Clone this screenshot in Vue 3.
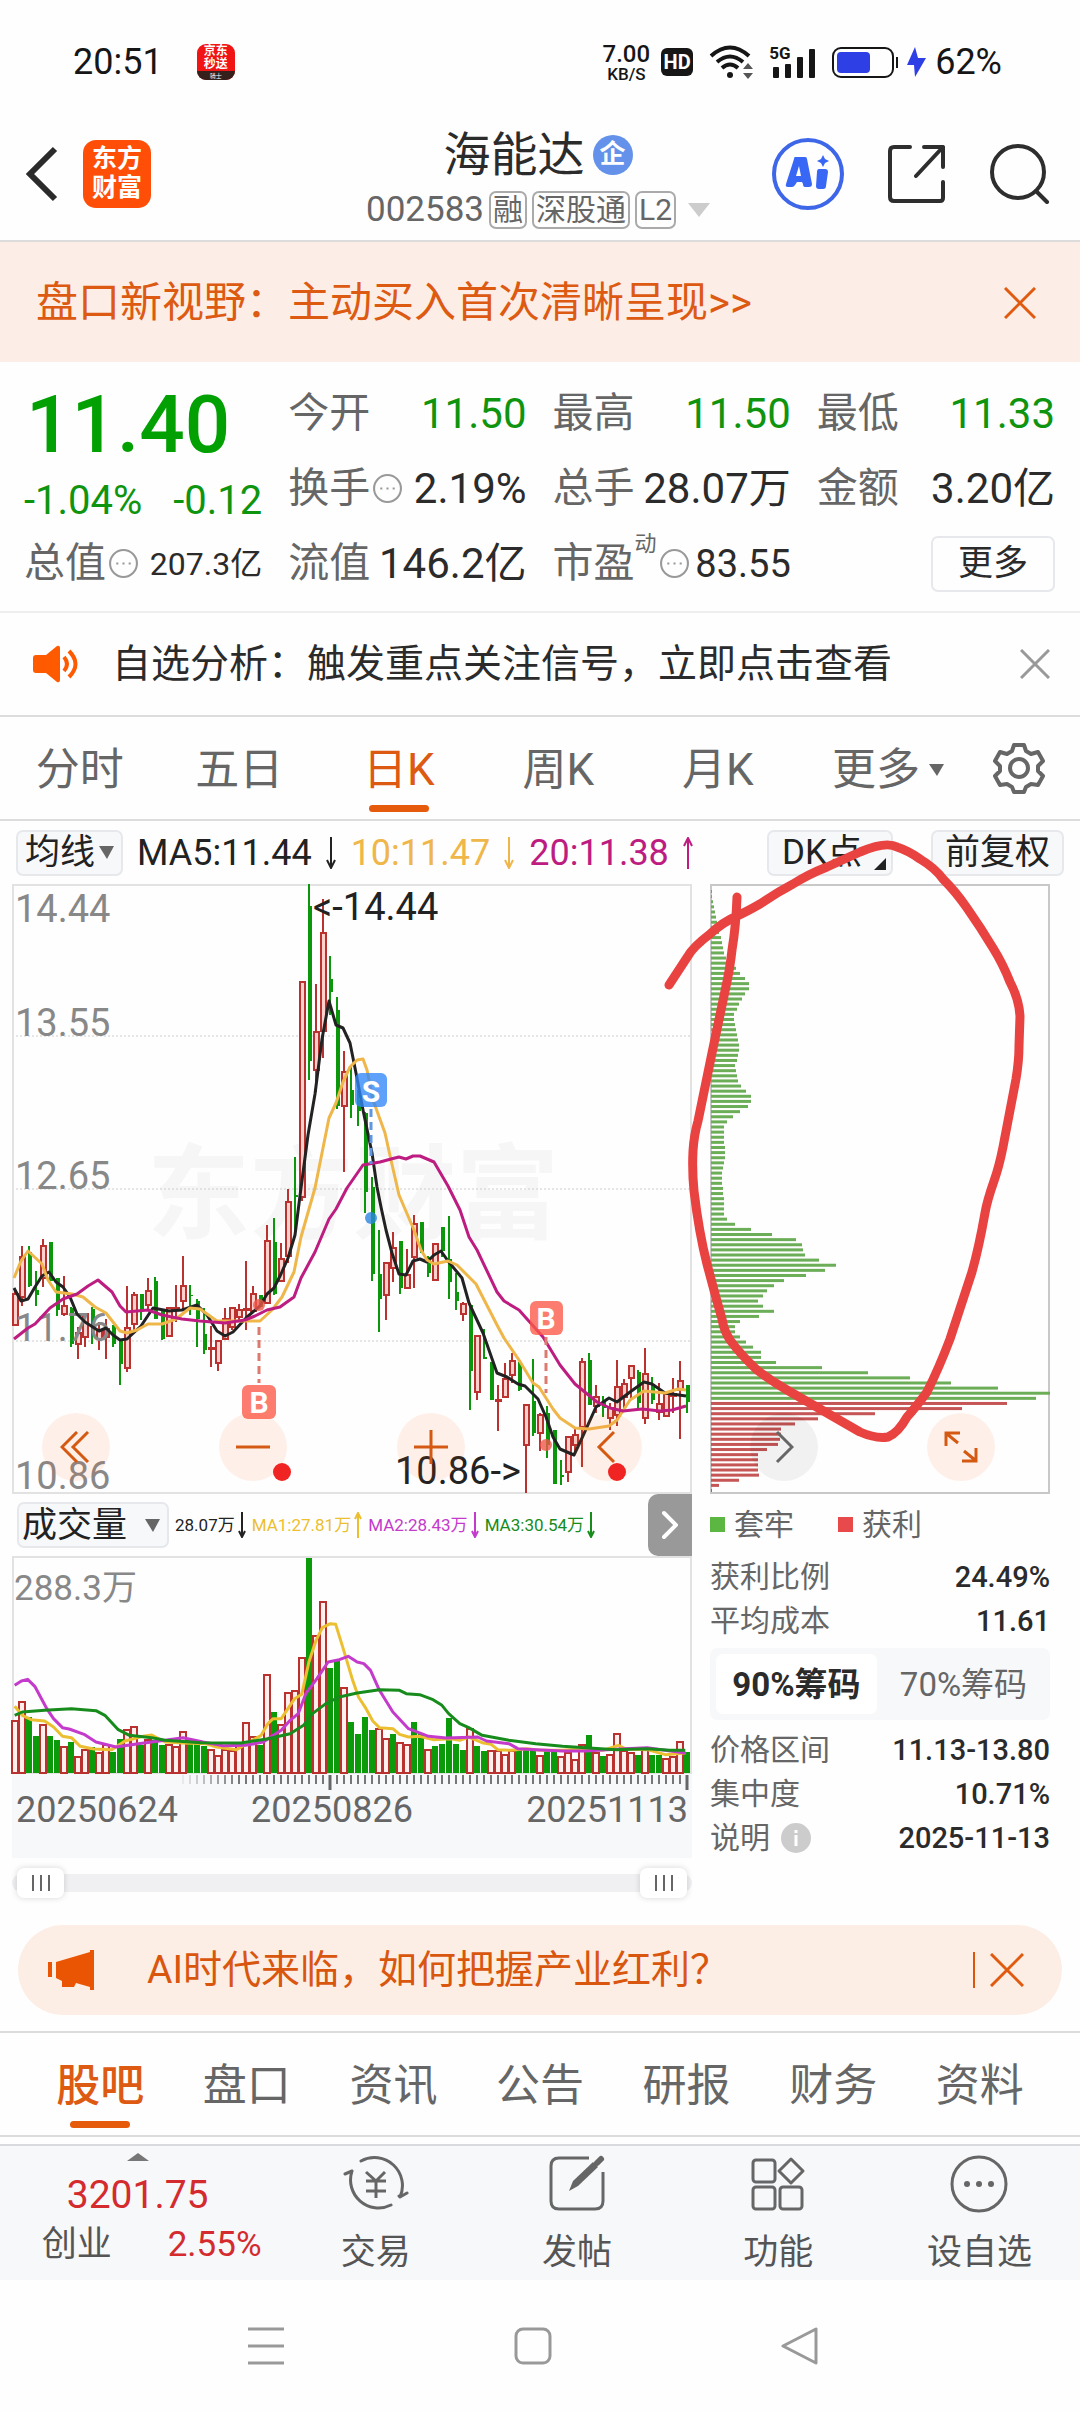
<script setup>
import { ref } from 'vue'

// [direction, high, body top, body bottom, low] in chart units
const candleRows = [
  ['r', 1290, 1294, 1325, 1326], ['r', 1246, 1257, 1297, 1306], ['g', 1246, 1252, 1286, 1287], ['g', 1271, 1290, 1295, 1306],
  ['r', 1239, 1246, 1278, 1287], ['g', 1242, 1242, 1281, 1281], ['g', 1278, 1278, 1310, 1316], ['r', 1276, 1306, 1314, 1316],
  ['g', 1307, 1308, 1344, 1347], ['r', 1327, 1333, 1344, 1359], ['r', 1313, 1314, 1337, 1347], ['g', 1307, 1309, 1331, 1344],
  ['r', 1322, 1330, 1339, 1350], ['r', 1319, 1329, 1337, 1359], ['g', 1325, 1325, 1344, 1347], ['g', 1339, 1339, 1364, 1385],
  ['r', 1286, 1328, 1368, 1372], ['r', 1292, 1295, 1324, 1330], ['g', 1294, 1294, 1311, 1320], ['r', 1278, 1291, 1305, 1311],
  ['g', 1277, 1281, 1319, 1319], ['g', 1309, 1309, 1339, 1340], ['r', 1308, 1308, 1336, 1336], ['r', 1285, 1308, 1309, 1322],
  ['r', 1256, 1286, 1301, 1309], ['g', 1285, 1295, 1296, 1315], ['g', 1299, 1301, 1319, 1347], ['g', 1308, 1334, 1350, 1354],
  ['r', 1326, 1348, 1349, 1367], ['r', 1341, 1341, 1363, 1371], ['r', 1308, 1319, 1339, 1339], ['r', 1308, 1308, 1327, 1330],
  ['r', 1304, 1310, 1317, 1322], ['r', 1261, 1309, 1310, 1330], ['r', 1286, 1294, 1311, 1312], ['g', 1295, 1295, 1307, 1307],
  ['r', 1225, 1241, 1303, 1303], ['g', 1218, 1242, 1294, 1295], ['r', 1243, 1259, 1281, 1281], ['r', 1189, 1202, 1256, 1263],
  ['g', 1157, 1195, 1197, 1235], ['r', 982, 982, 1197, 1201], ['g', 884, 906, 1061, 1080], ['r', 984, 1032, 1070, 1092],
  ['r', 899, 933, 1031, 1058], ['g', 956, 979, 992, 1015], ['g', 997, 1010, 1106, 1109], ['r', 1051, 1072, 1106, 1172],
  ['g', 1066, 1090, 1105, 1118], ['g', 1090, 1100, 1111, 1126], ['g', 1112, 1113, 1192, 1213], ['g', 1177, 1187, 1274, 1281],
  ['g', 1230, 1274, 1299, 1332], ['r', 1263, 1263, 1295, 1320], ['r', 1232, 1248, 1268, 1282], ['g', 1241, 1241, 1288, 1294],
  ['r', 1249, 1275, 1288, 1288], ['r', 1215, 1224, 1257, 1288], ['g', 1222, 1222, 1253, 1253], ['g', 1256, 1257, 1273, 1277],
  ['r', 1244, 1244, 1280, 1280], ['g', 1227, 1227, 1251, 1257], ['g', 1216, 1259, 1282, 1299], ['g', 1273, 1292, 1301, 1310],
  ['r', 1302, 1304, 1314, 1321], ['g', 1305, 1305, 1371, 1410], ['r', 1336, 1336, 1392, 1400], ['g', 1329, 1357, 1359, 1359],
  ['g', 1362, 1362, 1400, 1400], ['r', 1385, 1400, 1401, 1431], ['r', 1363, 1379, 1397, 1397], ['r', 1353, 1361, 1375, 1383],
  ['g', 1362, 1362, 1390, 1391], ['r', 1405, 1405, 1445, 1493], ['g', 1359, 1401, 1433, 1436], ['r', 1413, 1415, 1433, 1451],
  ['g', 1406, 1413, 1445, 1458], ['g', 1430, 1430, 1484, 1484], ['g', 1460, 1475, 1477, 1485], ['r', 1437, 1437, 1472, 1482],
  ['r', 1427, 1435, 1445, 1453], ['r', 1358, 1362, 1427, 1467], ['g', 1353, 1360, 1405, 1405], ['r', 1385, 1397, 1406, 1413],
  ['g', 1396, 1400, 1408, 1417], ['r', 1403, 1408, 1418, 1430], ['r', 1360, 1387, 1415, 1426], ['r', 1379, 1384, 1397, 1412],
  ['r', 1366, 1366, 1378, 1398], ['g', 1370, 1372, 1403, 1408], ['r', 1348, 1374, 1418, 1424], ['g', 1377, 1387, 1400, 1404],
  ['r', 1383, 1404, 1412, 1420], ['r', 1394, 1394, 1416, 1416], ['r', 1378, 1394, 1396, 1413], ['r', 1361, 1381, 1390, 1439],
  ['g', 1385, 1385, 1402, 1413],
]
const candles = candleRows.map(([dir, high, top, bottom, low], i) => ({ dir, high, top, bottom, low, x: 15 + i * 7 }))

const volumes = [
  53, 72, 56, 37, 49, 37, 33, 27, 31, 17, 24, 26, 21, 29, 21, 34, 44, 47, 28, 34, 33, 28, 29, 27, 42, 33, 31, 27, 24, 18, 24, 23,
  29, 51, 37, 28, 99, 61, 49, 81, 83, 116, 215, 138, 172, 105, 113, 86, 51, 39, 56, 43, 45, 35, 39, 31, 29, 51, 39, 24, 27, 29,
  55, 29, 23, 45, 27, 22, 23, 23, 19, 23, 23, 23, 23, 18, 22, 23, 17, 21, 14, 29, 38, 21, 17, 19, 40, 23, 21, 18, 25, 18, 18,
  15, 17, 32, 21,
]
const volumeDirs =
  'rrggrggrgrrgrrggrrgrggrrrgggrrrrrrrgrgrrrrgrrggrggggrrgrrggrgggggrggrrrrgggrggrrrrgrgrrrrgrggrrrg'
const volumeBars = volumes.map((h, i) => ({ h, x: 15 + i * 7, dir: volumeDirs[i] }))

const ticks = Array.from({ length: 73 }, (_, i) => ({ x: 183 + i * 7, o: Math.min(1, (i + 1) / 9) }))

const trapped = [
  1, 1, 2, 3, 4, 5, 6, 7, 8, 10, 11, 12, 13, 15, 18, 25, 29, 34, 38, 38, 34, 31, 28, 26, 23, 23, 24, 25, 26, 27, 28, 28, 27, 26,
  24, 25, 26, 27, 30, 35, 40, 40, 37, 29, 22, 16, 13, 13, 13, 13, 14, 14, 14, 13, 12, 11, 11, 11, 12, 12, 13, 13, 13, 13, 16, 24,
  40, 61, 85, 91, 92, 94, 108, 125, 114, 95, 73, 63, 56, 52, 47, 52, 63, 48, 29, 24, 24, 29, 35, 42, 50, 50, 65, 111, 157, 199,
  240, 287, 339, 325,
]
const profit = [296, 251, 164, 107, 84, 70, 70, 69, 67, 56, 47, 47, 47, 47, 48, 28, 8, 1]
const chips = [...trapped.map((w) => ({ w, c: '#6cad58' })), ...profit.map((w) => ({ w, c: '#c65555' }))].map((d, i, all) => ({
  ...d,
  y: 890 + (i * 599) / (all.length - 1),
}))

const periods = ['分时', '五日', '日K', '周K', '月K']
const sections = ['股吧', '盘口', '资讯', '公告', '研报', '财务', '资料']
const period = ref('日K')
const section = ref('股吧')
const chipRange = ref('90%')
</script>

<template>
  <main class="page">
    <header class="status">
      <span class="clock">20:51</span>
      <span class="jd"><b>京东<br />秒送</b><i>骑士</i></span>
      <span class="net"><b>7.00</b><span>KB/S</span></span>
      <span class="hd">HD</span>
      <svg class="wifi" width="48" height="36" viewBox="0 0 48 36" fill="none" stroke="#161616">
        <path d="M2 12Q21-5 40 12M8 18Q21 7 34 18M13 24Q21 17 29 24" stroke-width="4" />
        <circle cx="21" cy="31" r="3" fill="#161616" stroke="none" />
        <path d="M34 25l5-6 5 6zM34 29l5 6 5-6z" fill="#555" stroke="none" />
      </svg>
      <span class="cell">
        <span>5G</span>
        <svg width="48" height="34" viewBox="0 0 48 34" fill="#161616">
          <rect x="4" y="22" width="6" height="11" rx="1" /><rect x="16" y="19" width="6" height="14" rx="1" />
          <rect x="28" y="12" width="6" height="21" rx="1" /><rect x="40" y="4" width="6" height="29" rx="1" />
        </svg>
      </span>
      <svg class="battery" width="96" height="34" viewBox="0 0 96 34">
        <rect x="2" y="3" width="60" height="29" rx="8" fill="none" stroke="#161616" stroke-width="2" />
        <rect x="6" y="7" width="33" height="21" rx="4" fill="#2f3fe6" />
        <rect x="65" y="12" width="2" height="11" fill="#161616" />
        <path d="M84 2L76 20h7l1 12 11-19h-8z" fill="#2f3fe6" />
      </svg>
      <span class="clock">62%</span>
    </header>

    <header class="head">
      <div class="head-left">
        <button class="plain" aria-label="返回">
          <svg width="32" height="56" viewBox="0 0 32 56" fill="none" stroke="#2b2b2b" stroke-width="6"><path d="M29 3L4 28l25 25" /></svg>
        </button>
        <span class="logo">东方<br />财富</span>
      </div>
      <div class="head-mid">
        <h1>海能达<span class="badge">企</span></h1>
        <p><span>002583</span><i>融</i><i>深股通</i><i>L2</i><svg width="22" height="14" viewBox="0 0 22 14"><path d="M0 0h22L11 14z" fill="#ccc" /></svg></p>
      </div>
      <div class="head-right">
        <button class="plain" aria-label="AI">
          <svg width="72" height="72" viewBox="0 0 72 72">
            <circle cx="36" cy="36" r="34" fill="none" stroke="#3d67e8" stroke-width="4" />
            <path fill="#3867f5" fill-rule="evenodd" d="M23 19h10q2 0 2 2l5 25q0 3-3 3h-4q-2 0-2-3l-1-2h-5l-2 3q-1 2-3 2h-4q-3 0-2-3l8-25q0-2 1-2zm4 9l-3 10h5zM47 31h6q3 0 3 3l-2 14q0 3-3 3h-4q-3 0-3-3l1-14q0-3 2-3zM51 17l2 4 4 2-4 2-2 4-2-4-4-2 4-2z" />
          </svg>
        </button>
        <button class="plain" aria-label="分享">
          <svg width="58" height="58" viewBox="0 0 58 58" fill="none" stroke="#2e2e2e" stroke-width="4" stroke-linecap="round" stroke-linejoin="round">
            <path d="M22 2H6Q2 2 2 6v46q0 4 4 4h46q3 0 3-3V37M36 2h19v20M55 2L28 31" />
          </svg>
        </button>
        <button class="plain" aria-label="搜索">
          <svg width="60" height="60" viewBox="0 0 60 60" fill="none" stroke="#2e2e2e" stroke-width="4" stroke-linecap="round">
            <circle cx="28" cy="28" r="26" /><path d="M46 47l11 11" />
          </svg>
        </button>
      </div>
    </header>

    <section class="banner">
      <a href="#">盘口新视野：主动买入首次清晰呈现&gt;&gt;</a>
      <button class="plain" aria-label="关闭"><svg width="32" height="32" viewBox="0 0 32 32" stroke="#e05a10" stroke-width="3"><path d="M1 1l30 30M31 1L1 31" /></svg></button>
    </section>

    <section class="quote">
      <div class="price"><strong>11.40</strong><p><span>-1.04%</span><span>-0.12</span></p></div>
      <p><span>今开</span><b class="green">11.50</b></p>
      <p><span>最高</span><b class="green">11.50</b></p>
      <p><span>最低</span><b class="green">11.33</b></p>
      <p><span>换手<svg class="dots" viewBox="0 0 30 30"><circle cx="15" cy="15" r="13" /><path d="M8 15h2M14 15h2M20 15h2" /></svg></span><b>2.19%</b></p>
      <p><span>总手</span><b>28.07万</b></p>
      <p><span>金额</span><b>3.20亿</b></p>
      <p><span>总值<svg class="dots" viewBox="0 0 30 30"><circle cx="15" cy="15" r="13" /><path d="M8 15h2M14 15h2M20 15h2" /></svg></span><b class="small">207.3亿</b></p>
      <p><span>流值</span><b>146.2亿</b></p>
      <p><span>市盈<sup>动</sup><svg class="dots" viewBox="0 0 30 30"><circle cx="15" cy="15" r="13" /><path d="M8 15h2M14 15h2M20 15h2" /></svg></span><b class="mid">83.55</b></p>
      <p class="end"><button class="more">更多</button></p>
    </section>

    <section class="news">
      <svg width="46" height="38" viewBox="0 0 46 38">
        <path d="M3 10h10L24 1q3-1 3 2v32q0 3-3 2L13 28H3q-3 0-3-3V13q0-3 3-3z" fill="#ff5a00" />
        <path d="M31 12q6 7 0 14M36 6q13 13 0 26" fill="none" stroke="#ff5a00" stroke-width="4" />
      </svg>
      <a href="#">自选分析：触发重点关注信号，立即点击查看</a>
      <button class="plain" aria-label="关闭"><svg width="30" height="30" viewBox="0 0 30 30" stroke="#999" stroke-width="3"><path d="M1 1l28 28M29 1L1 29" /></svg></button>
    </section>

    <nav class="periods">
      <button v-for="p in periods" :key="p" :class="{ on: p === period }" @click="period = p"><span>{{ p }}</span></button>
      <button class="drop"><span>更多</span><svg width="15" height="12" viewBox="0 0 15 12"><path d="M0 0h15L8 12z" fill="#666" /></svg></button>
      <button class="gear" aria-label="设置">
        <svg width="52" height="52" viewBox="0 0 52 52" fill="none" stroke="#666" stroke-width="4" stroke-linejoin="round">
          <path d="M21 3h10l2 6 5 3 7-2 5 9-5 5v5l5 5-5 9-7-1-5 3-2 5H21l-2-5-5-3-7 1-5-9 5-5v-5l-5-5 5-9 7 2 5-3z" /><circle cx="26" cy="26" r="9" />
        </svg>
      </button>
    </nav>

    <section class="board">
      <div class="tools">
        <button class="chip-btn">均线<svg width="15" height="13" viewBox="0 0 15 13"><path d="M0 0h15L8 13z" fill="#666" /></svg></button>
        <span class="ma">MA5:11.44<svg viewBox="0 0 12 32"><path d="M6 0v30M2 23l4 8 4-8" /></svg></span>
        <span class="ma yellow">10:11.47<svg viewBox="0 0 12 32"><path d="M6 0v30M2 23l4 8 4-8" /></svg></span>
        <span class="ma pink">20:11.38<svg viewBox="0 0 12 32"><path d="M6 32V2M2 9l4-8 4 8" /></svg></span>
        <button class="chip-btn dk">DK点<svg width="12" height="12" viewBox="0 0 12 12"><path d="M12 0v12H0z" fill="#222" /></svg></button>
        <button class="chip-btn adj">前复权</button>
      </div>

      <div class="cols">
        <div class="left">
          <div class="stage">
            <svg class="plot" viewBox="12 884 680 610">
              <text x="147" y="1231" class="mark">东方财富</text>
              <g stroke="#ccc" stroke-width="1" stroke-dasharray="2 2"><path d="M12 1036H692M12 1189H692M12 1341H692" /></g>
              <rect x="13" y="885" width="678" height="608" fill="none" stroke="#e2e2e2" stroke-width="2" />
              <g v-for="c in candles" :key="c.x">
                <template v-if="c.dir === 'r'">
                  <path :d="`M${c.x} ${c.high}V${c.top}M${c.x} ${c.bottom}V${c.low}`" stroke="#b93230" stroke-width="2" />
                  <rect :x="c.x - 2" :y="c.top" width="5" :height="c.bottom - c.top" fill="#ffd0cc" stroke="#b93230" stroke-width="2" />
                </template>
                <template v-else>
                  <path :d="`M${c.x} ${c.high}V${c.low}`" stroke="#0c960c" stroke-width="2" />
                  <rect :x="c.x - 1" :y="c.top" width="4" :height="c.bottom - c.top" fill="#0c960c" />
                </template>
              </g>
              <g class="axis">
                <text x="15" y="922">14.44</text><text x="15" y="1036">13.55</text><text x="15" y="1189">12.65</text>
                <text x="15" y="1341">11.76</text><text x="15" y="1489">10.86</text>
              </g>
              <g fill="none" stroke-width="3" stroke-linejoin="round">
                <polyline stroke="#222" points="14,1288 21,1301 28,1299 35,1287 42,1276 49,1272 56,1282 63,1287 70,1297 77,1314 85,1322 99,1331 106,1328 113,1335 120,1340 127,1339 141,1326 153,1308 169,1311 182,1310 197,1305 207,1315 217,1331 225,1336 233,1332 247,1317 260,1306 267,1294 274,1288 281,1274 288,1258 295,1235 301,1188 308,1135 315,1094 322,1039 329,1001 336,1025 343,1028 350,1043 356,1073 363,1110 372,1153 377,1187 381,1207 386,1230 392,1253 399,1274 406,1275 413,1261 420,1259 427,1262 434,1255 441,1251 448,1261 462,1278 469,1303 483,1333 497,1373 507,1377 518,1384 525,1386 538,1399 546,1417 553,1437 560,1449 574,1455 582,1438 596,1407 609,1398 617,1402 630,1392 644,1382 652,1384 665,1393 686,1396" />
                <polyline stroke="#efb64a" points="14,1278 21,1261 28,1251 42,1264 48,1280 56,1292 72,1294 83,1297 95,1307 106,1313 120,1331 127,1333 137,1330 148,1324 162,1324 176,1319 190,1308 200,1309 217,1321 260,1321 272,1310 282,1297 294,1272 301,1237 315,1188 329,1118 336,1103 343,1082 350,1067 357,1060 363,1059 367,1070 373,1100 385,1133 391,1160 399,1195 405,1209 414,1230 421,1250 427,1260 434,1264 448,1261 457,1265 476,1284 497,1325 504,1338 519,1360 533,1383 539,1387 553,1409 560,1418 575,1428 589,1429 609,1426 617,1420 630,1400 644,1391 665,1393 678,1389 686,1390" />
                <polyline stroke="#bd1c80" points="14,1339 28,1328 35,1324 50,1308 63,1299 77,1294 88,1286 98,1280 112,1292 120,1306 126,1312 148,1310 162,1315 182,1319 200,1321 225,1323 245,1320 255,1316 267,1310 280,1307 294,1297 301,1278 315,1252 329,1219 336,1209 347,1188 363,1165 380,1162 391,1159 399,1157 406,1159 413,1156 420,1156 434,1162 448,1186 460,1210 469,1237 477,1250 497,1292 504,1301 519,1310 543,1337 560,1365 575,1384 597,1402 610,1408 623,1411 642,1409 660,1411 672,1410 686,1406" />
              </g>
              <path d="M371 1109V1164" stroke="#5f96e0" stroke-width="3" stroke-dasharray="8 5" />
              <path d="M259 1327V1383M546 1337V1393" stroke="#dc7a70" stroke-width="3" stroke-dasharray="8 5" />
              <circle cx="371" cy="1218" r="6" fill="#2a86e0" opacity=".8" />
              <g fill="#f0574a" opacity=".8"><circle cx="259" cy="1305" r="6" /><circle cx="546" cy="1445" r="6" /></g>
              <rect x="355" y="1073" width="32" height="34" rx="6" fill="#2f86fa" opacity=".78" />
              <g fill="#fb5947" opacity=".78"><rect x="242" y="1385" width="34" height="34" rx="6" /><rect x="530" y="1301" width="33" height="34" rx="6" /></g>
              <g class="tag"><text x="371" y="1102">S</text><text x="259" y="1413">B</text><text x="546" y="1329">B</text></g>
              <g class="peak"><text x="313" y="920">&lt;-14.44</text><text x="395" y="1484">10.86-&gt;</text></g>
            </svg>
            <div class="ctrls">
              <button class="ctl" aria-label="左移"><svg width="32" height="32" viewBox="0 0 32 32"><path d="M17 1L2 16l15 15M28 1L13 16l15 15" /></svg></button>
              <button class="ctl dot" aria-label="缩小"><svg width="34" height="34" viewBox="0 0 34 34"><path d="M0 17h34" /></svg></button>
              <button class="ctl" aria-label="放大"><svg width="34" height="34" viewBox="0 0 34 34"><path d="M0 17h34M17 0v34" /></svg></button>
              <button class="ctl dot inner" aria-label="后退"><svg width="34" height="34" viewBox="0 0 34 34"><path d="M23 2L8 17l15 15" /></svg></button>
            </div>
          </div>

          <div class="volhead">
            <button class="chip-btn vol">成交量<svg width="15" height="13" viewBox="0 0 15 13"><path d="M0 0h15L8 13z" fill="#666" /></svg></button>
            <span>28.07万<svg viewBox="0 0 8 26"><path d="M4 0v25M1 19l3 6 3-6" /></svg></span>
            <span class="v1">MA1:27.81万<svg viewBox="0 0 8 26"><path d="M4 26V1M1 7l3-6 3 6" /></svg></span>
            <span class="v2">MA2:28.43万<svg viewBox="0 0 8 26"><path d="M4 0v25M1 19l3 6 3-6" /></svg></span>
            <span class="v3">MA3:30.54万<svg viewBox="0 0 8 26"><path d="M4 0v25M1 19l3 6 3-6" /></svg></span>
            <button class="next" aria-label="下一项"><svg width="16" height="30" viewBox="0 0 16 30" fill="none" stroke="#fff" stroke-width="4" stroke-linecap="round"><path d="M2 3l12 12L2 27" /></svg></button>
          </div>

          <svg class="plot" viewBox="12 1556 680 302">
            <rect x="12" y="1774" width="680" height="84" fill="#f7f8fa" />
            <rect x="13" y="1557" width="678" height="216" fill="none" stroke="#e2e2e2" stroke-width="2" />
            <text x="14" y="1600" class="vmax">288.3万</text>
            <template v-for="b in volumeBars" :key="b.x">
              <rect v-if="b.dir === 'r'" :x="b.x - 3" :y="1774 - b.h" width="6" :height="b.h - 1" fill="#fff0ee" stroke="#b93230" stroke-width="2" />
              <rect v-else :x="b.x - 3" :y="1773 - b.h" width="6" :height="b.h" fill="#0a9a0a" />
            </template>
            <svg x="12" y="1557" width="680" height="216" viewBox="27 200 1523 648" preserveAspectRatio="none" class="lines">
              <polyline stroke="#ebbf30" points="33,648 50,675 70,688 100,692 120,710 140,738 160,742 180,768 210,776 250,778 280,752 320,738 340,734 370,755 410,758 460,760 485,770 530,778 555,758 585,735 600,700 612,685 630,685 645,655 660,625 676,612 692,515 708,450 722,412 740,400 752,402 770,480 790,570 803,620 820,655 835,692 850,712 880,715 895,732 915,740 940,738 970,748 1010,745 1030,750 1050,740 1080,757 1100,762 1115,778 1145,780 1180,775 1210,780 1260,780 1310,775 1350,780 1385,765 1400,775 1450,778 1490,793 1535,788" />
              <polyline stroke="#c43bcb" points="33,585 48,572 62,567 78,588 105,655 120,685 140,712 155,716 190,733 215,755 260,770 310,760 370,750 410,742 455,755 500,766 550,765 590,755 612,735 630,720 650,690 668,670 685,610 710,565 735,515 760,508 780,498 800,515 815,520 830,540 850,600 880,665 915,715 960,738 1000,743 1070,740 1090,752 1140,760 1160,775 1200,778 1260,782 1310,782 1400,775 1450,772 1490,780 1535,788" />
              <polyline stroke="#178c1c" points="33,675 50,665 100,660 160,655 215,661 235,675 265,718 290,735 340,742 370,750 450,757 540,758 600,745 650,730 680,705 700,670 730,640 760,620 800,608 850,598 895,600 910,610 940,613 970,628 990,645 1005,670 1030,700 1050,712 1080,735 1140,750 1200,760 1260,768 1380,778 1450,775 1500,780 1535,780" />
            </svg>
            <path v-for="t in ticks" :key="t.x" :d="`M${t.x} 1775v9`" :opacity="t.o" stroke="#777" stroke-width="2" />
            <path d="M330 1775v15M687 1775v15" stroke="#666" stroke-width="3" />
            <g class="dates"><text x="16" y="1822">20250624</text><text x="251" y="1822">20250826</text><text x="688" y="1822" text-anchor="end">20251113</text></g>
          </svg>

          <div class="range">
            <input type="range" min="0" max="96" value="0" aria-label="起始日期" />
            <input type="range" min="0" max="96" value="96" aria-label="结束日期" />
          </div>
        </div>

        <div class="right">
          <div class="stage">
            <svg class="plot" viewBox="710 884 340 610">
              <rect x="711" y="885" width="338" height="608" fill="none" stroke="#c8c8c8" stroke-width="2" />
              <rect v-for="c in chips" :key="c.y" x="711" :y="c.y" :width="c.w" height="3" :fill="c.c" />
            </svg>
            <div class="ctrls">
              <button class="ctl gray" aria-label="前进"><svg width="20" height="34" viewBox="0 0 20 34"><path d="M3 2l15 15L3 32" /></svg></button>
              <button class="ctl" aria-label="全屏"><svg width="34" height="34" viewBox="0 0 34 34"><path d="M2 16V3h14M3 4l11 9M32 18v13H18M31 30l-11-9" /></svg></button>
            </div>
          </div>
          <p class="legend"><i></i><span>套牢</span><i class="red"></i><span>获利</span></p>
          <dl>
            <div><dt>获利比例</dt><dd>24.49%</dd></div>
            <div><dt>平均成本</dt><dd>11.61</dd></div>
          </dl>
          <div class="seg">
            <button v-for="r in ['90%', '70%']" :key="r" :class="{ on: r === chipRange }" @click="chipRange = r">{{ r }}筹码</button>
          </div>
          <dl>
            <div><dt>价格区间</dt><dd>11.13-13.80</dd></div>
            <div><dt>集中度</dt><dd>10.71%</dd></div>
            <div><dt>说明<svg width="30" height="30" viewBox="0 0 30 30"><circle cx="15" cy="15" r="15" fill="#ccc" /><path d="M15 12v11M15 7v3" stroke="#fff" stroke-width="3" /></svg></dt><dd>2025-11-13</dd></div>
          </dl>
        </div>
      </div>

      <svg class="scribble" viewBox="0 820 1080 680" fill="none" stroke="#e94341" stroke-width="9" stroke-linecap="round" stroke-linejoin="round">
        <path d="M669 984L688 955Q693 946 710 933Q723 921 737 915Q746 911 760 903Q776 892 793 883Q809 873 827 866L860 851Q886 840 897 846Q909 850 920 858Q935 867 943 878Q956 891 967 907Q981 927 993 947Q1003 963 1010 981Q1019 998 1020 1015L1019 1045Q1019 1060 1016 1078L1003 1146Q999 1166 994 1180Q987 1200 985 1212Q979 1246 972 1271L950 1338Q939 1367 927 1391Q916 1406 907 1416Q898 1432 888 1436Q876 1438 860 1431L827 1412L787 1389Q770 1379 757 1369Q740 1353 730 1339Q724 1330 722 1318Q714 1290 707 1263Q699 1232 694 1190Q692 1170 693 1150Q694 1134 698 1120L712 1052L725 990Q730 968 732 949Q736 925 737 896" />
      </svg>
    </section>

    <section class="ai">
      <svg width="46" height="40" viewBox="0 0 46 40" fill="#ea5504"><path d="M0 12h4v15H0zM8 12L42 2V0h4v40h-4v-3l-14-4-2 4H14v-6L8 28z" /></svg>
      <a href="#">AI时代来临，如何把握产业红利？</a>
      <i></i>
      <button class="plain" aria-label="关闭"><svg width="34" height="34" viewBox="0 0 34 34" stroke="#e05a10" stroke-width="3"><path d="M1 1l32 32M33 1L1 33" /></svg></button>
    </section>

    <nav class="sections">
      <button v-for="s in sections" :key="s" :class="{ on: s === section }" @click="section = s"><span>{{ s }}</span></button>
    </nav>

    <footer class="dock">
      <a href="#" class="index">
        <svg width="22" height="8" viewBox="0 0 22 8"><path d="M0 8h22L11 0z" fill="#777" /></svg>
        <b>3201.75</b>
        <span><i>创业</i><em>2.55%</em></span>
      </a>
      <a href="#">
        <svg width="66" height="60" viewBox="0 0 66 60" fill="none" stroke="#666" stroke-width="3" stroke-linecap="round">
          <path d="M18 8A28 28 0 0 1 57 44M57 44l-1-1M57 44l7-4M48 52A28 28 0 0 1 9 18M9 18l-7 3" />
          <path d="M23 19l10 9 9-9M33 28v17M23 28h20M23 38h20" stroke-linecap="butt" />
        </svg><span>交易</span>
      </a>
      <a href="#">
        <svg width="58" height="60" viewBox="0 0 58 60" fill="none" stroke="#666" stroke-width="3">
          <path d="M41 5H11q-8 0-8 8v35q0 8 8 8h36q8 0 8-8V19" /><path d="M21 38l4-10L45 9l5 5L30 33z" fill="#666" stroke="none" /><path d="M49 10l4-4" stroke-width="6" stroke-linecap="round" />
        </svg><span>发帖</span>
      </a>
      <a href="#">
        <svg width="56" height="60" viewBox="0 0 56 60" fill="none" stroke="#666" stroke-width="3" stroke-linejoin="round">
          <rect x="3" y="7" width="22" height="22" rx="3" /><rect x="3" y="34" width="22" height="22" rx="3" /><rect x="30" y="34" width="22" height="22" rx="3" /><path d="M41 6l12 12-12 12-12-12z" />
        </svg><span>功能</span>
      </a>
      <a href="#">
        <svg width="60" height="60" viewBox="0 0 60 60" fill="none" stroke="#666" stroke-width="3">
          <circle cx="30" cy="31" r="27" /><g fill="#666" stroke="none"><circle cx="18" cy="31" r="3" /><circle cx="30" cy="31" r="3" /><circle cx="42" cy="31" r="3" /></g>
        </svg><span>设自选</span>
      </a>
    </footer>

    <nav class="system">
      <button class="plain" aria-label="菜单"><svg width="38" height="38" viewBox="0 0 38 38" stroke="#999" stroke-width="3"><path d="M1 2h36M1 19h36M1 36h36" /></svg></button>
      <button class="plain" aria-label="主页"><svg width="38" height="38" viewBox="0 0 38 38" fill="none" stroke="#999" stroke-width="3"><rect x="2" y="2" width="34" height="34" rx="7" /></svg></button>
      <button class="plain" aria-label="后退"><svg width="38" height="38" viewBox="0 0 38 38" fill="none" stroke="#999" stroke-width="3" stroke-linejoin="round"><path d="M2 19L35 2v34z" /></svg></button>
    </nav>
  </main>
</template>

<style>
body { margin: 0; background: #fdfdfd; }
</style>

<style scoped>
* { box-sizing: border-box; margin: 0; }
.page { font-family: Roboto, "Noto Sans CJK SC", sans-serif; color: #2b2b2b; background: #fefefe; line-height: 1; overflow: hidden; }
i, em { font-style: normal; }
b { font-weight: 400; }
a { color: inherit; text-decoration: none; white-space: nowrap; }
svg { display: block; flex: none; }
button { font: inherit; color: inherit; cursor: pointer; white-space: nowrap; }
.plain { border: 0; padding: 0; background: none; display: block; }

.status { display: flex; align-items: center; height: 124px; padding: 0 78px 0 73px; color: #161616; }
.clock { font-size: 36px; }
.jd { width: 38px; height: 36px; margin: 0 auto 0 34px; border-radius: 9px; overflow: hidden; background: #f01414; color: #fff; font-size: 12px; line-height: 13px; text-align: center; display: flex; flex-direction: column; }
.jd b { font-weight: 700; padding-top: 1px; }
.jd i { background: #35201c; font-size: 6px; line-height: 9px; }
.net { display: flex; flex-direction: column; align-items: center; font-size: 17px; line-height: 17px; font-weight: 500; }
.net b { font-size: 24px; line-height: 24px; font-weight: 500; }
.hd { margin: 0 16px 0 11px; width: 32px; height: 28px; border-radius: 6px; background: #161616; color: #fff; font-size: 20px; line-height: 28px; font-weight: 700; text-align: center; }
.wifi { margin-right: 12px; }
.cell { position: relative; margin-right: 14px; }
.cell span { position: absolute; left: 0; top: 0; font-size: 17px; font-weight: 700; }
.battery { margin-right: 8px; }

.head { display: grid; grid-template-columns: 1fr auto 1fr; align-items: center; height: 118px; padding: 0 30px 0 26px; border-bottom: 2px solid #dcdcdc; }
.head-left, .head-right { display: flex; align-items: center; padding-bottom: 16px; }
.head-left { gap: 25px; }
.head-right { justify-content: flex-end; gap: 44px; }
.logo { width: 68px; height: 68px; border-radius: 13px; background: #ff4e08; color: #fff; font-size: 25px; line-height: 29px; font-weight: 700; text-align: center; padding-top: 4px; }
h1 { display: flex; align-items: center; justify-content: center; gap: 8px; font-size: 47px; line-height: 56px; font-weight: 400; }
.badge { width: 40px; height: 40px; border-radius: 50%; background: #6492ea; color: #fff; font-size: 26px; line-height: 38px; font-weight: 700; text-align: center; }
.head-mid p { display: flex; align-items: center; font-size: 35px; line-height: 54px; color: #666; gap: 5px; }
.head-mid i { border: 2px solid #aaa; border-radius: 7px; font-size: 30px; line-height: 34px; padding: 0 2px; }
.head-mid p svg { margin-left: 7px; }

.banner { display: flex; align-items: center; justify-content: space-between; height: 120px; padding: 2px 44px 0 36px; background: #fceee6; color: #dd5a12; font-size: 42px; }

.quote { display: grid; grid-template-columns: repeat(4, 1fr); grid-auto-rows: 75px; column-gap: 26px; padding: 14px 25px 10px 24px; border-bottom: 2px solid #eee; }
.quote > p { display: flex; align-items: center; justify-content: space-between; font-size: 42px; white-space: nowrap; }
.quote > p > span { display: flex; align-items: center; color: #666; font-size: 41px; }
.green, .price { color: #0f940f; }
.price { grid-row: span 2; }
.price strong { display: block; font-size: 80px; line-height: 98px; font-weight: 500; color: #02a002; padding-left: 2px; }
.price p { display: flex; justify-content: space-between; font-size: 40px; line-height: 54px; }
.dots { width: 31px; height: 31px; margin-left: 2px; fill: none; stroke: #999; stroke-width: 2; }
.quote sup { font-size: 22px; align-self: flex-start; margin-top: -10px; }
.quote .small { font-size: 32px; }
.quote .mid { font-size: 38px; }
.quote .end { justify-content: flex-end; }
.more { width: 124px; height: 56px; padding: 0; border: 2px solid #e6e8ec; border-radius: 7px; background: #fefefe; font-size: 35px; }

.news { display: flex; align-items: center; gap: 33px; height: 104px; padding: 0 30px 0 33px; border-bottom: 2px solid #dcdcdc; font-size: 39px; }
.news .plain { margin-left: auto; }

.periods, .sections { display: flex; border-bottom: 2px solid #dcdcdc; height: 104px; }
.periods button, .sections button { position: relative; flex: 1; border: 0; padding: 4px 0 0; background: none; font-size: 44px; color: #666; }
.periods .on, .sections .on { color: #dd5a12; }
.periods .on::after, .sections .on::after { content: ""; position: absolute; left: 50%; bottom: 7px; width: 60px; margin-left: -30px; height: 7px; border-radius: 4px; background: #e65a0c; }
.sections .on { font-weight: 500; }
.periods .drop { display: flex; align-items: center; justify-content: flex-end; gap: 9px; }
.drop svg { margin-right: 13px; }
.periods .gear { flex: none; width: 123px; padding: 0; display: flex; align-items: center; justify-content: center; }

.board { position: relative; }
.scribble { position: absolute; left: 0; top: 0; width: 100%; pointer-events: none; }
.tools { display: flex; align-items: center; height: 63px; padding: 0 16px; }
.chip-btn { display: flex; align-items: center; height: 46px; padding: 0 9px; border: 2px solid #e6e8ec; border-radius: 7px; background: #f7f8fa; font-size: 35px; gap: 4px; color: #222; }
.tools > .chip-btn:first-child { padding: 0 7px; }
.ma { display: flex; align-items: center; gap: 13px; margin-left: 14px; font-size: 36px; color: #222; }
.ma svg { width: 12px; height: 32px; fill: none; stroke: currentColor; stroke-width: 2; }
.yellow { color: #efb64a; }
.pink { color: #bd1c80; }
.tools .dk { margin-left: auto; margin-right: 38px; padding: 0 5px 0 13px; gap: 12px; }
.tools .adj { padding: 0 12px; }
.dk svg { align-self: flex-end; margin-bottom: 4px; }
.cols { display: flex; gap: 18px; padding: 0 30px 0 12px; }
.left { flex: 680; min-width: 0; }
.right { flex: 340; min-width: 0; color: #666; }
.stage { position: relative; }
.plot { width: 100%; height: auto; overflow: visible; }
.mark { font-size: 103px; font-weight: 700; fill: #f6f6f6; }
.axis text { font-size: 38px; fill: #888; }
.peak text { font-size: 38px; fill: #222; }
.tag text { font-size: 30px; font-weight: 700; fill: #fff; text-anchor: middle; }
.vmax { font-size: 35px; fill: #888; }
.dates text { font-size: 36px; fill: #666; }
.lines { fill: none; stroke-width: 3; }
.lines polyline { vector-effect: non-scaling-stroke; stroke-linejoin: round; }
.ctrls { position: absolute; left: 0; right: 0; bottom: 13px; display: flex; justify-content: space-between; padding: 0 50px 0 30px; }
.right .ctrls { padding: 0 55px 0 40px; }
.ctl { position: relative; width: 68px; height: 68px; border: 0; border-radius: 50%; padding: 0; display: flex; align-items: center; justify-content: center; background: rgba(250, 100, 20, .09); }
.ctl svg { fill: none; stroke: #d45a14; stroke-width: 3; }
.gray { background: rgba(0, 0, 0, .05); }
.gray svg { stroke: #666; }
.dot::after { content: ""; position: absolute; right: -4px; bottom: 0; width: 18px; height: 18px; border-radius: 50%; background: #f02422; }
.inner::after { right: 16px; }

.volhead { display: flex; align-items: center; height: 62px; padding-left: 5px; font-size: 17px; color: #222; }
.volhead span { display: flex; align-items: center; gap: 3px; margin-left: 6px; }
.volhead span svg { width: 8px; height: 26px; fill: none; stroke: currentColor; stroke-width: 2; }
.vol { padding: 0 7px 0 3px; gap: 18px; }
.volhead .v1 { color: #ebbf30; }
.volhead .v2 { color: #c43bcb; }
.volhead .v3 { color: #178c1c; }
.next { width: 44px; height: 62px; margin-left: auto; border: 0; padding: 0; border-radius: 10px 0 0 10px; background: #999; display: flex; align-items: center; justify-content: center; }

.range { position: relative; height: 18px; margin: 16px 0 33px; border-radius: 9px; background: #f0f0f3; }
.range input { position: absolute; left: 5px; right: 5px; top: -6px; width: calc(100% - 10px); height: 30px; margin: 0; appearance: none; background: none; pointer-events: none; }
.range input::-webkit-slider-thumb { appearance: none; pointer-events: auto; width: 47px; height: 30px; border-radius: 7px; box-shadow: 0 0 6px rgba(0, 0, 0, .16); background: linear-gradient(#666, #666) 15px 7px / 2px 16px no-repeat, linear-gradient(#666, #666) 23px 7px / 2px 16px no-repeat, linear-gradient(#666, #666) 31px 7px / 2px 16px no-repeat, #fff; }

.legend { display: flex; align-items: center; height: 61px; font-size: 30px; }
.legend i { width: 15px; height: 15px; background: #5cb642; margin-right: 9px; }
.legend .red { background: #e84a4c; margin-left: 44px; }
dl > div { display: flex; align-items: center; justify-content: space-between; height: 44px; font-size: 29px; }
dt { display: flex; align-items: center; gap: 11px; font-size: 30px; }
dd { font-weight: 500; color: #2b2b2b; }
.seg { display: flex; gap: 6px; margin: 5px 0 8px; padding: 6px; border-radius: 7px; background: #f7f8fa; }
.seg button { flex: 1; height: 60px; padding: 0; border: 0; border-radius: 7px; background: none; font-size: 33px; }
.seg .on { background: #fff; color: #2b2b2b; font-weight: 700; }

.ai { display: flex; align-items: center; height: 90px; margin: 0 18px 16px; padding: 0 38px 0 30px; border-radius: 45px; background: #fceee5; color: #d9560f; font-size: 39px; }
.ai a { margin-left: 53px; }
.ai i { width: 2px; height: 36px; margin: 0 15px 0 auto; background: #d9560f; }
.sections { height: 106px; padding: 0 27px; border-top: 2px solid #dcdcdc; }

.dock { display: flex; height: 136px; margin-top: 7px; border-top: 2px solid #d8dadd; background: #f7f8fa; color: #555; font-size: 35px; text-align: center; }
.dock a { flex: 201; display: flex; flex-direction: column; align-items: center; gap: 16px; padding-top: 7px; }
.dock a > span { line-height: 48px; }
.dock .index { flex: 275; gap: 0; }
.index b { font-size: 39px; line-height: 52px; margin-top: 8px; color: #d32b2e; }
.dock .index > span { display: flex; gap: 56px; padding-left: 28px; line-height: 48px; }
.index em { color: #d32b2e; }
.system { display: flex; justify-content: space-between; align-items: center; height: 132px; padding: 0 261px 0 247px; }
</style>
